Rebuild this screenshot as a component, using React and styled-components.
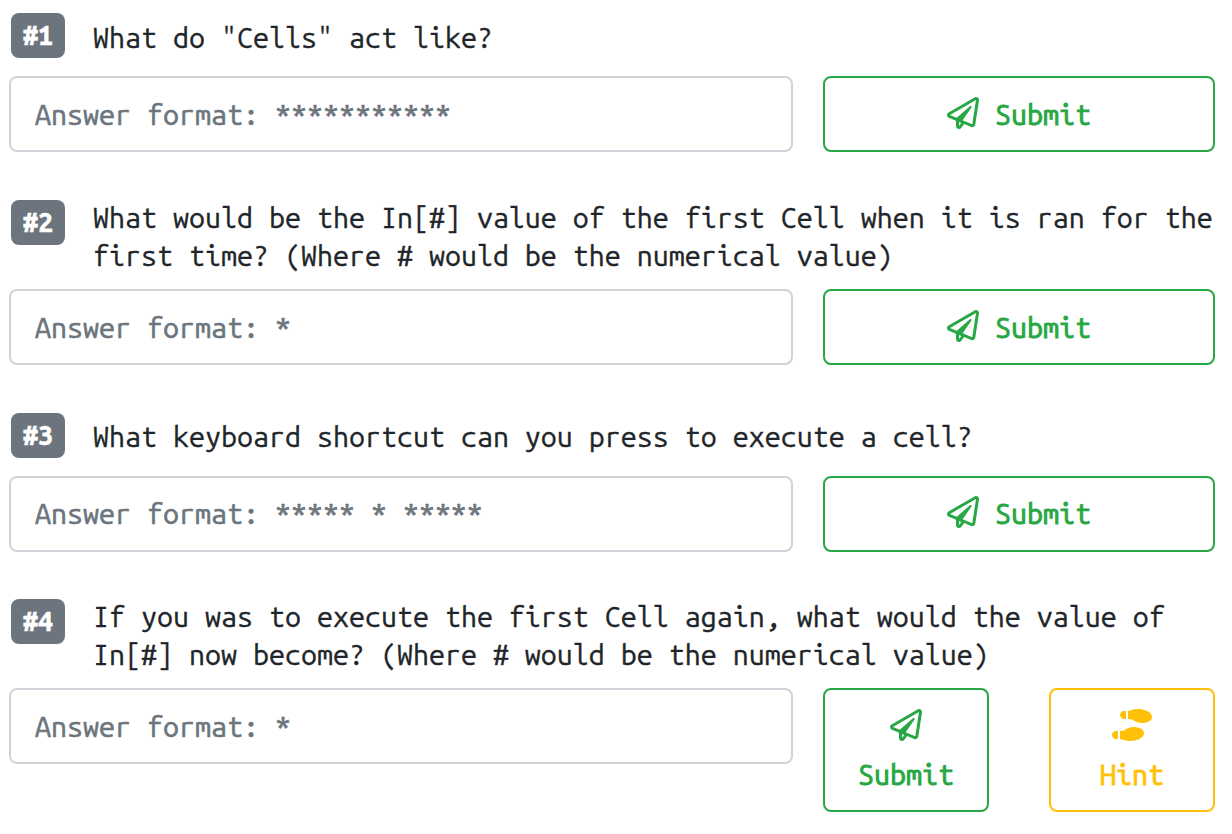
import React from "react";
import styled, { createGlobalStyle } from "styled-components";
import { FaRegPaperPlane, FaShoePrints } from "react-icons/fa";

const GlobalStyle = createGlobalStyle`
  *, *::before, *::after { box-sizing: border-box; }
  body { margin: 0; background: #fff; color: #212529; }
  body, button, input {
    font-family: "Ubuntu Mono", "DejaVu Sans Mono", monospace;
    font-size: 28.57px;
    letter-spacing: 0;
  }
`;

const Page = styled.main`
  display: flex;
  flex-direction: column;
  gap: 48px;
  width: 1232px;
  height: 834px;
  padding: 13px 17px 0 9px;
  overflow: hidden;
`;

const Task = styled.section`
  display: flex;
  flex-direction: column;
  margin-top: ${(p) => (p.$tight ? "-1px" : "0")};
`;

const Heading = styled.div`
  display: flex;
  align-items: flex-start;
  height: ${(p) => (p.$lines > 1 ? 89 : 63)}px;
  padding-left: 2px;
`;

const Badge = styled.span`
  display: flex;
  align-items: center;
  justify-content: center;
  flex: none;
  width: 54px;
  height: 45px;
  margin-right: 28px;
  border-radius: 8px;
  background: #6c757d;
  color: #fff;
  font-size: 27px;
  font-weight: 700;
  line-height: 45px;
  -webkit-text-stroke: 0.4px #fff;
`;

const Question = styled.p`
  margin: ${(p) => p.$offset}px 0 0;
  line-height: 38.4px;
  white-space: pre;
  -webkit-text-stroke: 0.35px #212529;
`;

const AnswerRow = styled.div`
  display: flex;
  align-items: flex-start;
  gap: 30px;
`;

const Answer = styled.input`
  width: 784px;
  height: 76px;
  padding: 0 24px ${(p) => (p.$raised ? 2 : 0)}px;
  border: 2px solid #ced4da;
  border-radius: 8px;
  outline: none;
  background: #fff;
  &::placeholder { color: #6c757d; opacity: 1; -webkit-text-stroke: 0.6px #6c757d; }
`;

const Actions = styled.div`
  display: flex;
  flex: 1;
  gap: 60px;
`;

const ActionButton = styled.button`
  display: flex;
  flex: 1;
  flex-direction: ${(p) => (p.$stacked ? "column" : "row")};
  align-items: center;
  justify-content: ${(p) => (p.$stacked ? "flex-start" : "center")};
  gap: ${(p) => (p.$stacked ? 14 : 16)}px;
  height: ${(p) => (p.$stacked ? 124 : 76)}px;
  padding: ${(p) => (p.$stacked ? "19px 0 0" : p.$raised ? "0 0 2px" : "0")};
  border: 2px solid ${(p) => p.$color};
  border-radius: 8px;
  background: #fff;
  color: ${(p) => p.$color};
  -webkit-text-stroke: 0.95px ${(p) => p.$color};
  line-height: 38px;

  svg {
    flex: none;
    height: 32px;
    width: ${(p) => p.$iconWidth || 32}px;
    margin-bottom: ${(p) => (p.$stacked ? 0 : 3)}px;
    stroke: none;
  }
`;

const tasks = [
  { lines: ['What do "Cells" act like?'], offset: 5, format: "***********" },
  {
    lines: [
      "What would be the In[#] value of the first Cell when it is ran for the",
      "first time? (Where # would be the numerical value)",
    ],
    offset: -2,
    format: "*",
  },
  {
    lines: ["What keyboard shortcut can you press to execute a cell?"],
    offset: 4,
    format: "***** * *****",
    raised: true,
  },
  {
    lines: [
      "If you was to execute the first Cell again, what would the value of",
      "In[#] now become? (Where # would be the numerical value)",
    ],
    offset: -2,
    format: "*",
    hint: true,
  },
];

export default function App() {
  return (
    <>
      <GlobalStyle />
      <Page>
        {tasks.map(({ lines, offset, format, hint, raised }, i) => (
          <Task key={i} $tight={i === 3}>
            <Heading $lines={lines.length}>
              <Badge>#{i + 1}</Badge>
              <Question $offset={offset}>{lines.join("\n")}</Question>
            </Heading>
            <AnswerRow>
              <Answer placeholder={`Answer format: ${format}`} $raised={raised} />
              <Actions>
                <ActionButton $color="#28a745" $stacked={hint} $raised={raised}>
                  <FaRegPaperPlane />
                  <span>Submit</span>
                </ActionButton>
                {hint && (
                  <ActionButton $color="#ffc107" $stacked $iconWidth={40}>
                    <FaShoePrints />
                    <span>Hint</span>
                  </ActionButton>
                )}
              </Actions>
            </AnswerRow>
          </Task>
        ))}
      </Page>
    </>
  );
}
